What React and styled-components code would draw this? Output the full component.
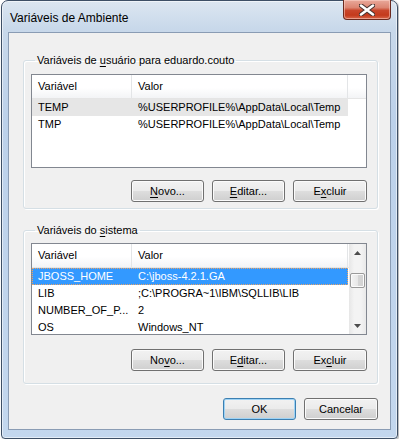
import styled, { createGlobalStyle } from "styled-components";

const GlobalStyle = createGlobalStyle`
  html, body {
    margin: 0;
    padding: 0;
    background: #ffffff;
  }
  body {
    font-family: "Liberation Sans", Arial, sans-serif;
    font-size: 11px;
    color: #000;
  }
`;

const Frame = styled.div`
  box-sizing: border-box;
  width: 397px;
  height: 439px;
  margin-left: 1px;
  border: 1px solid #3d4f66;
  border-radius: 7px 7px 4px 4px;
  background: linear-gradient(180deg, #dce6f1 0px, #c8d8ea 28px, #bcd1ea 120px, #c3d7ee 100%);
  box-shadow: inset 0 0 0 1px rgba(255, 255, 255, 0.55), 1px 1px 2px rgba(0, 0, 0, 0.35);
  padding-bottom: 8px;
  display: flex;
  flex-direction: column;
`;

const TitleBar = styled.div`
  height: 31px;
  display: flex;
  justify-content: space-between;
  align-items: flex-start;
`;

const Title = styled.div`
  font-size: 12px;
  line-height: 14px;
  padding: 10px 0 0 8px;
  color: #000;
`;

const CloseButton = styled.div`
  box-sizing: border-box;
  width: 48px;
  height: 20px;
  margin: -1px 6px 0 0;
  border: 1px solid #6b2a1f;
  border-top: none;
  border-radius: 0 0 4px 4px;
  background: linear-gradient(180deg, #e9a99b 0%, #dc8572 40%, #c9462b 55%, #c43a1c 80%, #d8674b 100%);
  box-shadow: inset 0 0 0 1px rgba(255, 220, 210, 0.5);
  display: flex;
  align-items: center;
  justify-content: center;
`;

const Client = styled.div`
  box-sizing: border-box;
  width: 383px;
  height: 398px;
  margin: 0 6px;
  border: 1px solid #8a9cb4;
  background: #f0f0f0;
  padding: 20px 12px 0 14px;
  display: flex;
  flex-direction: column;
`;

const Group = styled.fieldset`
  margin: ${(p) => p.$top || 0}px 0 0 0;
  padding: 0 10px ${(p) => p.$bottom}px 7px;
  border: 1px solid #d5dfe5;
  border-radius: 3px;
  box-shadow: inset 1px 1px 0 #ffffff, 1px 1px 0 #ffffff;
  min-width: 0;
`;

const Legend = styled.legend`
  padding: 0 2px;
  margin-left: 4px;
  line-height: 14px;
`;

const List = styled.div`
  box-sizing: border-box;
  margin-top: ${(p) => p.$top}px;
  height: ${(p) => p.$height}px;
  border: 1px solid #828790;
  background: #ffffff;
  overflow: hidden;
  display: flex;
`;

const ListBody = styled.div`
  flex: 1;
  min-width: 0;
  display: flex;
  flex-direction: column;
`;

const Header = styled.div`
  box-sizing: border-box;
  height: 24px;
  flex: none;
  display: grid;
  grid-template-columns: 100px 216px 1fr;
  background: linear-gradient(180deg, #ffffff 0%, #ffffff 55%, #f3f4f6 100%);
  border-bottom: 1px solid #e5e5e5;
`;

const HeaderCell = styled.div`
  padding-left: 6px;
  line-height: 23px;
  border-right: ${(p) => (p.$last ? "none" : "1px solid #e3e5e7")};
  white-space: nowrap;
`;

const Row = styled.div`
  height: 17px;
  flex: none;
  display: grid;
  grid-template-columns: 100px 216px;
  width: 316px;
  line-height: 17px;
  background: ${(p) => (p.$active ? "#3399ff" : p.$selected ? "#e6e6e6" : "transparent")};
  color: ${(p) => (p.$active ? "#ffffff" : "#000")};
  outline: ${(p) => (p.$active ? "1px dotted #e8a468" : "none")};
  outline-offset: -1px;
`;

const Cell = styled.div`
  padding-left: 6px;
  white-space: nowrap;
  overflow: hidden;
`;

const ScrollBar = styled.div`
  width: 17px;
  flex: none;
  display: flex;
  flex-direction: column;
  background: linear-gradient(90deg, #e6e6e6 0%, #f3f3f3 30%, #f3f3f3 70%, #e9e9e9 100%);
`;

const ArrowBox = styled.div`
  height: 17px;
  flex: none;
  display: flex;
  align-items: center;
  justify-content: center;
`;

const Thumb = styled.div`
  box-sizing: border-box;
  width: 15px;
  height: 15px;
  margin: 12px 0 0 1px;
  border: 1px solid #9a9a9a;
  border-radius: 2px;
  background: linear-gradient(90deg, #f4f4f4 0%, #e8e8e8 50%, #d6d6d6 51%, #d2d2d2 100%);
  box-shadow: inset 0 0 0 1px #fbfbfb;
`;

const Track = styled.div`
  flex: 1;
`;

const ButtonRow = styled.div`
  margin-top: ${(p) => p.$top}px;
  display: flex;
  justify-content: flex-end;
  gap: 8px;
`;

const Button = styled.div`
  box-sizing: border-box;
  width: ${(p) => p.$w || 73}px;
  height: 22px;
  border: 1px solid ${(p) => (p.$default ? "#3c7fb1" : "#707070")};
  border-radius: 3px;
  background: linear-gradient(180deg, #f2f2f2 0%, #ebebeb 48%, #dddddd 52%, #cfcfcf 100%);
  box-shadow: inset 0 0 0 1px ${(p) => (p.$default ? "#9ed3f5" : "#fbfbfb")};
  display: flex;
  align-items: center;
  justify-content: center;
  line-height: 14px;
`;

const Key = styled.u`
  text-decoration-thickness: 1px;
  text-underline-offset: 2px;
`;

const Footer = styled.div`
  margin-top: 14px;
  display: flex;
  justify-content: flex-end;
  gap: 8px;
`;

function Arrow({ down }) {
  return (
    <svg width="7" height="4" viewBox="0 0 7 4">
      <path d={down ? "M0 0 H7 L3.5 4 Z" : "M0 4 H7 L3.5 0 Z"} fill="#4c4c4c" />
    </svg>
  );
}

function CloseGlyph() {
  return (
    <svg width="16" height="12" viewBox="0 0 16 12">
      <path d="M2 1.5 L14 10.5 M14 1.5 L2 10.5" stroke="#4a3430" strokeWidth="4.6" strokeLinecap="round" />
      <path d="M2 1.5 L14 10.5 M14 1.5 L2 10.5" stroke="#ffffff" strokeWidth="2.6" strokeLinecap="round" />
    </svg>
  );
}

const userVars = [
  ["TEMP", "%USERPROFILE%\\AppData\\Local\\Temp"],
  ["TMP", "%USERPROFILE%\\AppData\\Local\\Temp"],
];

const systemVars = [
  ["JBOSS_HOME", "C:\\jboss-4.2.1.GA"],
  ["LIB", ";C:\\PROGRA~1\\IBM\\SQLLIB\\LIB"],
  ["NUMBER_OF_P...", "2"],
  ["OS", "Windows_NT"],
];

export default function App() {
  return (
    <>
      <GlobalStyle />
      <Frame>
        <TitleBar>
          <Title>Variáveis de Ambiente</Title>
          <CloseButton>
            <CloseGlyph />
          </CloseButton>
        </TitleBar>
        <Client>
          <Group $bottom={6}>
            <Legend>
              Variáveis de <Key>u</Key>suário para eduardo.couto
            </Legend>
            <List $top={7} $height={94}>
              <ListBody>
                <Header>
                  <HeaderCell>Variável</HeaderCell>
                  <HeaderCell>Valor</HeaderCell>
                  <HeaderCell $last />
                </Header>
                {userVars.map(([name, value], i) => (
                  <Row key={name} $selected={i === 0}>
                    <Cell>{name}</Cell>
                    <Cell>{value}</Cell>
                  </Row>
                ))}
              </ListBody>
            </List>
            <ButtonRow $top={12}>
              <Button>
                <span><Key>N</Key>ovo...</span>
              </Button>
              <Button>
                <span><Key>E</Key>ditar...</span>
              </Button>
              <Button $w={74}>
                <span>E<Key>x</Key>cluir</span>
              </Button>
            </ButtonRow>
          </Group>
          <Group $top={14} $bottom={12}>
            <Legend>
              Variáveis do <Key>s</Key>istema
            </Legend>
            <List $top={6} $height={92}>
              <ListBody>
                <Header>
                  <HeaderCell>Variável</HeaderCell>
                  <HeaderCell>Valor</HeaderCell>
                  <HeaderCell $last />
                </Header>
                {systemVars.map(([name, value], i) => (
                  <Row key={name} $active={i === 0}>
                    <Cell>{name}</Cell>
                    <Cell>{value}</Cell>
                  </Row>
                ))}
              </ListBody>
              <ScrollBar>
                <ArrowBox>
                  <Arrow />
                </ArrowBox>
                <Thumb />
                <Track />
                <ArrowBox>
                  <Arrow down />
                </ArrowBox>
              </ScrollBar>
            </List>
            <ButtonRow $top={14}>
              <Button>
                <span>No<Key>v</Key>o...</span>
              </Button>
              <Button>
                <span>E<Key>d</Key>itar...</span>
              </Button>
              <Button $w={74}>
                <span>Ex<Key>c</Key>luir</span>
              </Button>
            </ButtonRow>
          </Group>
          <Footer>
            <Button $default>OK</Button>
            <Button $w={74}>Cancelar</Button>
          </Footer>
        </Client>
      </Frame>
    </>
  );
}
